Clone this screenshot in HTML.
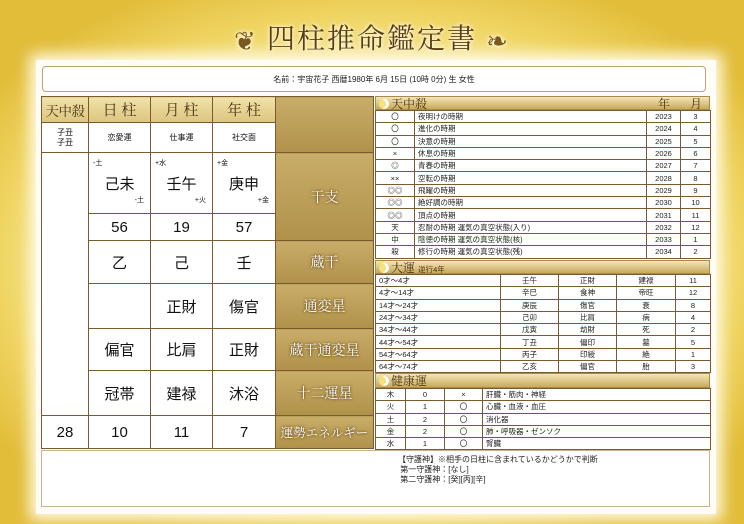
<!DOCTYPE html>
<html><head><meta charset="utf-8"><style>
*{margin:0;padding:0;box-sizing:border-box}
body{width:744px;height:524px;overflow:hidden;position:relative;font-family:"Liberation Sans","Noto Sans CJK JP",sans-serif;
background:radial-gradient(ellipse 62% 58% at 50% 50%,#fffdf0 0%,#faf0c0 55%,#f0d665 80%,#e2bd3a 100%);}
.title{position:absolute;top:17px;left:0;width:744px;text-align:center;font-family:"Noto Serif CJK SC","Liberation Serif",serif;font-size:28px;color:#5a3e10;letter-spacing:2px;text-shadow:0 0 3px #fff,0 0 6px #fff8d0}
.orn{font-size:26px;color:#7a5a1c;vertical-align:-2px}
.panel{position:absolute;left:36px;top:60px;width:680px;height:454px;background:#fefcf4;box-shadow:0 0 14px 6px #fffbe6}
.name{position:absolute;left:42px;top:66px;width:664px;height:26px;border:1px solid #b9a37a;border-radius:4px;background:#fff;font-size:8px;text-align:center;line-height:26px;color:#222}
table{border-collapse:collapse;position:absolute;table-layout:fixed}
td{border:1px solid #7a5a30;text-align:center;color:#111;background:#fff;padding:0}
#L{left:41px;top:96px;width:332px}
#L td{font-size:15px}
.hd{background:linear-gradient(#f0e2aa,#dcc57e);font-family:"Noto Serif CJK SC",serif;font-size:15px!important;color:#4a3410}
.hd.n{font-size:13.5px!important;letter-spacing:-0.5px}
.lb{background:linear-gradient(#c8ad68,#b0914a);color:#fff;font-family:"Noto Serif CJK SC",serif;font-size:14px!important;text-shadow:0 0 3px #6a4e1a,0 0 2px #6a4e1a}
.sm{font-size:8px!important}
.gz{position:relative}
.gz .a{position:absolute;left:4px;top:5px;font-size:7px}
.gz .b{position:absolute;right:6px;bottom:8px;font-size:7px}
.R{left:375px;width:335px}
.R td{font-size:7.5px;height:12.3px;line-height:11px;color:#222}
.R td.t{text-align:left;padding-left:3px}
.rh{position:absolute;left:375px;width:335px;background:linear-gradient(#f3e6b8,#c9aa5c);border:1px solid #a88a4a;font-family:"Noto Serif CJK SC",serif;color:#4a3410;font-size:12px;line-height:13px;padding-left:3px}
.moon{display:inline-block;width:10px;height:10px;border-radius:50%;background:#f6e27a;box-shadow:inset -3px 0 0 #fff;vertical-align:-1px;margin-right:2px}
.bot{position:absolute;left:41px;top:450px;width:669px;height:57px;border:1px solid #c8b692;background:#fff;font-size:8px;color:#222}
</style></head><body>
<div class="panel"></div>
<div class="title"><span class="orn">❦</span> 四柱推命鑑定書 <span class="orn">❧</span></div>
<div class="name">名前：宇宙花子 西暦1980年 6月 15日 (10時 0分) 生 女性</div>

<table id="L">
<colgroup><col style="width:47px"><col style="width:62px"><col style="width:62px"><col style="width:63px"><col style="width:98px"></colgroup>
<tr style="height:26px"><td class="hd n">天中殺</td><td class="hd">日 柱</td><td class="hd">月 柱</td><td class="hd">年 柱</td><td class="lb" rowspan="2"></td></tr>
<tr style="height:30px"><td class="sm" style="line-height:10px">子丑<br>子丑</td><td class="sm">恋愛運</td><td class="sm">仕事運</td><td class="sm">社交面</td></tr>
<tr style="height:61px"><td rowspan="6"></td><td class="gz"><span class="a">-土</span>己未<span class="b">-土</span></td><td class="gz"><span class="a">+水</span>壬午<span class="b">+火</span></td><td class="gz"><span class="a">+金</span>庚申<span class="b">+金</span></td><td class="lb" rowspan="2">干支</td></tr>
<tr style="height:27px"><td>56</td><td>19</td><td>57</td></tr>
<tr style="height:43px"><td>乙</td><td>己</td><td>壬</td><td class="lb">蔵干</td></tr>
<tr style="height:45px"><td></td><td>正財</td><td>傷官</td><td class="lb">通変星</td></tr>
<tr style="height:42px"><td>偏官</td><td>比肩</td><td>正財</td><td class="lb">蔵干通変星</td></tr>
<tr style="height:45px"><td>冠帯</td><td>建禄</td><td>沐浴</td><td class="lb">十二運星</td></tr>
<tr style="height:33px"><td>28</td><td>10</td><td>11</td><td>7</td><td class="lb" style="font-size:12.5px!important">運勢エネルギー</td></tr>
</table>

<div class="rh" style="top:96px;height:14px"><span class="moon"></span>天中殺<span style="position:absolute;left:282px">年</span><span style="position:absolute;left:314px">月</span></div>
<table class="R" style="top:110px">
<colgroup><col style="width:39px"><col style="width:232px"><col style="width:34px"><col style="width:30px"></colgroup>
<tr><td>〇</td><td class="t">夜明けの時期</td><td>2023</td><td>3</td></tr>
<tr><td>〇</td><td class="t">進化の時期</td><td>2024</td><td>4</td></tr>
<tr><td>〇</td><td class="t">決意の時期</td><td>2025</td><td>5</td></tr>
<tr><td>×</td><td class="t">休息の時期</td><td>2026</td><td>6</td></tr>
<tr><td>◎</td><td class="t">青春の時期</td><td>2027</td><td>7</td></tr>
<tr><td>××</td><td class="t">空転の時期</td><td>2028</td><td>8</td></tr>
<tr><td>◎◎</td><td class="t">飛躍の時期</td><td>2029</td><td>9</td></tr>
<tr><td>◎◎</td><td class="t">絶好調の時期</td><td>2030</td><td>10</td></tr>
<tr><td>◎◎</td><td class="t">頂点の時期</td><td>2031</td><td>11</td></tr>
<tr><td>天</td><td class="t">忍耐の時期 運気の真空状態(入り)</td><td>2032</td><td>12</td></tr>
<tr><td>中</td><td class="t">陰徳の時期 運気の真空状態(核)</td><td>2033</td><td>1</td></tr>
<tr><td>殺</td><td class="t">修行の時期 運気の真空状態(残)</td><td>2034</td><td>2</td></tr>
</table>

<div class="rh" style="top:260px;height:14px"><span class="moon"></span>大運 <span style="font-size:7.5px;font-family:'Liberation Sans','Noto Sans CJK JP',sans-serif">逆行4年</span></div>
<table class="R" style="top:274px">
<colgroup><col style="width:125px"><col style="width:58px"><col style="width:58px"><col style="width:59px"><col style="width:35px"></colgroup>
<tr><td class="t">0才～4才</td><td>壬午</td><td>正財</td><td>建禄</td><td>11</td></tr>
<tr><td class="t">4才～14才</td><td>辛巳</td><td>食神</td><td>帝旺</td><td>12</td></tr>
<tr><td class="t">14才～24才</td><td>庚辰</td><td>傷官</td><td>衰</td><td>8</td></tr>
<tr><td class="t">24才～34才</td><td>己卯</td><td>比肩</td><td>病</td><td>4</td></tr>
<tr><td class="t">34才～44才</td><td>戊寅</td><td>劫財</td><td>死</td><td>2</td></tr>
<tr><td class="t">44才～54才</td><td>丁丑</td><td>偏印</td><td>墓</td><td>5</td></tr>
<tr><td class="t">54才～64才</td><td>丙子</td><td>印綬</td><td>絶</td><td>1</td></tr>
<tr><td class="t">64才～74才</td><td>乙亥</td><td>偏官</td><td>胎</td><td>3</td></tr>
</table>

<div class="rh" style="top:373px;height:15px"><span class="moon"></span>健康運</div>
<table class="R" style="top:388px">
<colgroup><col style="width:30px"><col style="width:39px"><col style="width:38px"><col style="width:228px"></colgroup>
<tr><td>木</td><td>0</td><td>×</td><td class="t">肝臓・筋肉・神経</td></tr>
<tr><td>火</td><td>1</td><td>〇</td><td class="t">心臓・血液・血圧</td></tr>
<tr><td>土</td><td>2</td><td>〇</td><td class="t">消化器</td></tr>
<tr><td>金</td><td>2</td><td>〇</td><td class="t">肺・呼吸器・ゼンソク</td></tr>
<tr><td>水</td><td>1</td><td>〇</td><td class="t">腎臓</td></tr>
</table>

<div class="bot"><div style="position:absolute;left:356px;top:4px;line-height:10px">【守護神】※相手の日柱に含まれているかどうかで判断<br>&nbsp;第一守護神：[なし]<br>&nbsp;第二守護神：[癸][丙][辛]</div></div>
</body></html>
